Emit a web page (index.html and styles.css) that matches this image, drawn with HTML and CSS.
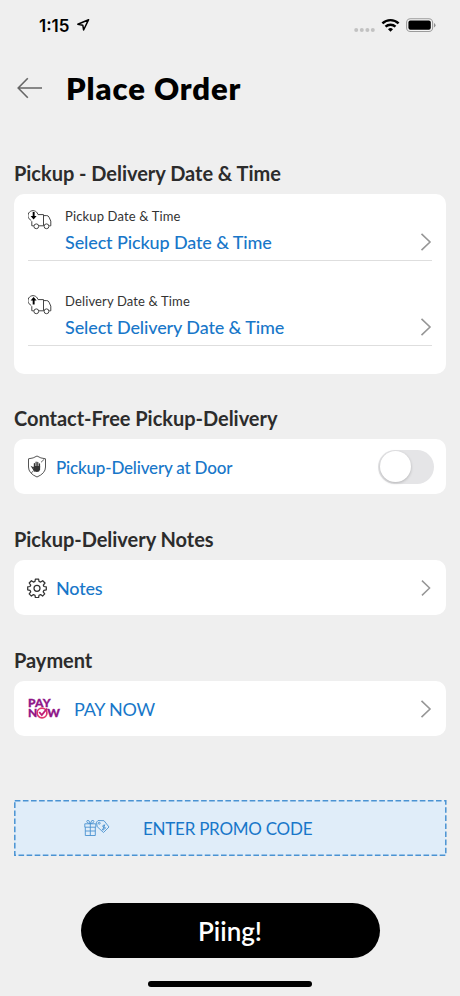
FILE: index.html
```html
<!DOCTYPE html>
<html lang="en">
<head>
<meta charset="utf-8">
<title>Place Order</title>
<link rel="stylesheet" href="styles.css">
</head>
<body>
<div class="status">
  <span class="clock">1:15</span>
  <svg class="loc" width="14" height="14" viewBox="0 0 14 14"><path d="M12.600 1.700 1.800 6.200 6.800 7.200 7.600 12Z" fill="none" stroke="#000" stroke-width="1.500" stroke-linejoin="round"/></svg>
  <svg class="indicators" width="84" height="18" viewBox="0 0 84 18">
    <g fill="#c2c2c2"><circle cx="4.2" cy="13" r="2"/><circle cx="9.8" cy="13" r="2"/><circle cx="15.4" cy="13" r="2"/><circle cx="20.8" cy="13" r="2"/></g>
    <g fill="none" stroke="#000" stroke-width="2.4"><path d="M30.4 6.4a11.6 11.6 0 0 1 16.2 0"/><path d="M33.5 9.7a7.2 7.2 0 0 1 10 0"/></g>
    <path d="M38.5 14.7 36 12.2a3.6 3.6 0 0 1 5 0Z"/>
    <rect x="54.6" y="1.7" width="26" height="12.8" rx="3.8" fill="#f4f4f4" stroke="#9b9b9b" stroke-width="1.1"/>
    <rect x="56.4" y="3.5" width="22.4" height="9.2" rx="2"/>
    <path d="M82 6v4.4q1.5-.8 1.5-2.2T82 6Z" fill="#8f8f8f"/>
  </svg>
</div>
<header class="header">
  <svg width="26" height="22" viewBox="0 0 26 22"><path d="M25 11H1.2M10.8 1.2 1.2 11l9.6 9.8" fill="none" stroke="#666" stroke-width="1.6"/></svg>
  <h1>Place Order</h1>
</header>

<section>
  <h2>Pickup - Delivery Date &amp; Time</h2>
  <div class="card schedule">
    <div class="slot">
      <svg class="truck" width="24" height="20" viewBox="0 0 24 20">
        <g fill="none" stroke="#444" stroke-width="1"><path d="M5.800 15.800H3.800V11.200M9.800 4.600h5.700v11.200h-4.600M15.500 5.600h3.300q1.500 0 2.200 1.500l1.800 4v4.700h-1.600"/><path d="M3.200 10.300A5 5 0 1 1 9.800 4.200"/><circle cx="8.300" cy="16.300" r="2.400"/><circle cx="18.500" cy="16.300" r="2.400"/></g>
        <path d="M4.700 2h1.900v4h2L5.600 9.500 2.600 6h2.100Z"/>
      </svg>
      <div class="text"><span class="label">Pickup Date &amp; Time</span><span class="link">Select Pickup Date &amp; Time</span></div>
      <svg class="chev" width="12" height="20" viewBox="0 0 12 20"><path d="m1.5 1.8 8.5 8.2-8.5 8.2" fill="none" stroke="#969696" stroke-width="1.6"/></svg>
    </div>
    <div class="slot">
      <svg class="truck" width="24" height="20" viewBox="0 0 24 20">
        <g fill="none" stroke="#444" stroke-width="1"><path d="M5.800 15.800H3.800V11.200M9.800 4.600h5.700v11.200h-4.600M15.500 5.600h3.300q1.500 0 2.200 1.500l1.800 4v4.700h-1.600"/><path d="M3.200 10.300A5 5 0 1 1 9.800 4.200"/><circle cx="8.300" cy="16.300" r="2.400"/><circle cx="18.500" cy="16.300" r="2.400"/></g>
        <path d="M4.700 9.500h1.900v-4h2L5.600 2 2.600 5.500h2.100Z"/>
      </svg>
      <div class="text"><span class="label">Delivery Date &amp; Time</span><span class="link">Select Delivery Date &amp; Time</span></div>
      <svg class="chev" width="12" height="20" viewBox="0 0 12 20"><path d="m1.5 1.8 8.5 8.2-8.5 8.2" fill="none" stroke="#969696" stroke-width="1.6"/></svg>
    </div>
  </div>
</section>

<section>
  <h2>Contact-Free Pickup-Delivery</h2>
  <div class="card row">
    <svg width="20" height="23" viewBox="0 0 19 23">
      <path d="M9.5 1Q13 3.4 18 3.8V12q0 6.4-8.5 10Q1 18.4 1 12V3.8Q6 3.4 9.500 1Z" fill="none" stroke="#555" stroke-width="1"/>
      <path d="M7 16 4.600 12.200l2.300 1V8.500M8.600 12V7M10.300 12V7.400M12 12.500V8.800" fill="none" stroke="#333" stroke-width="1.200" stroke-linecap="round"/>
      <path d="M6.300 11h6.300v3.500q-.5 2.500-3.200 2.500T6.300 14.500Z" fill="#333"/><path d="m13.500 7.300 3.300-3.100M3.800 18l2.500-2.600" stroke="#555" stroke-width=".9"/>
    </svg>
    <span class="link door">Pickup-Delivery at Door</span>
    <span class="switch"><span class="knob"></span></span>
  </div>
</section>

<section>
  <h2>Pickup-Delivery Notes</h2>
  <div class="card row">
    <svg width="20" height="20" viewBox="0 0 20 20" fill="none" stroke="#333" stroke-width="1.250" stroke-linejoin="round"><path d="M8.400 1h3.200l.4 2.400 1.700.7 2-1.400L18 5l-1.700 2.100.6 1.400 2.400.3v3l-2.400.5-.7 1.500 1.500 2.100-2.100 2.200-2-1.500-1.600.7-.4 2.300H8.400L8 17.300l-1.600-.7-2 1.500-2.200-2.200 1.500-2.100-.7-1.500-2.300-.5v-3l2.300-.3.700-1.400L2.200 5l2.200-2.300 2 1.400L8 3.400Z"/><circle cx="10" cy="10.300" r="3"/></svg>
    <span class="link notes">Notes</span>
    <svg class="chev" width="12" height="18" viewBox="0 0 12 20"><path d="m1.500 1.800 8.500 8.200-8.500 8.200" fill="none" stroke="#969696" stroke-width="1.600"/></svg>
  </div>
</section>

<section>
  <h2>Payment</h2>
  <div class="card row">
    <div class="paylogo">
      PAY<br>NOW
      <svg class="tick" width="13" height="13" viewBox="0 0 13 13"><circle cx="6" cy="7" r="4.900" fill="#fff" stroke="#e0386c" stroke-width="1.700"/><path d="m3.200 6 2.600 3.100 5.200-6.600" fill="none" stroke="#c02078" stroke-width="1.900"/></svg>
    </div>
    <span class="link paynow">PAY NOW</span>
    <svg class="chev" width="12" height="20" viewBox="0 0 12 20"><path d="m1.500 1.800 8.500 8.200-8.500 8.200" fill="none" stroke="#969696" stroke-width="1.600"/></svg>
  </div>
</section>

<div class="promo">
  <svg class="outline" width="433" height="57" viewBox="0 0 433 57"><rect x=".800" y=".800" width="431" height="54.500" fill="none" stroke="#4a93d3" stroke-width="1.500" stroke-dasharray="5.600 2.500"/></svg>
  <svg width="26" height="18" viewBox="0 0 26 18" fill="none" stroke="#4a92d0" stroke-width=".9">
    <path d="M.8 4.800h11V8.200H.8ZM1.300 8.200v8.300h10V8.200M6.300 4.800v11.700M1.300 12h10M6.300 4.600Q1.500 3.800 3.200 1.500 5 .2 6.300 4.600 7.600.2 9.400 1.500q1.700 2.300-3.100 3.100"/>
    <path d="m12.500 3.200 1.500-1.700 6 .2 5 6.300-5.500 5.500-6.300-5.800Z"/><circle cx="15.200" cy="4.200" r="1"/><path d="M21 6.500q-2-1-2.200.5t1.800 1.400-.2 1.800-2-.3M20.800 5.500l-2 5.300" stroke-width="1"/>
  </svg>
  <span>ENTER PROMO CODE</span>
</div>
<button class="submit">Piing!</button>
<div class="home"></div>
</body>
</html>
```

FILE: styles.css
```css
* { box-sizing: border-box; }
body {
  margin: 0;
  width: 460px;
  height: 996px;
  padding: 0 14px;
  overflow: hidden;
  background: #efefef;
  font-family: Lato, sans-serif;
  display: flex;
  flex-direction: column;
}
svg { display: block; flex: none; }
.status { display: flex; align-items: center; height: 50px; padding-left: 25px; flex: none; }
.clock { font: 600 17px/20px Inter, sans-serif; width: 33px; padding-top: 1px; white-space: nowrap; }
.loc { margin-left: 4px; }
.indicators { margin-left: auto; margin-right: 10px; position: relative; top: 1px; }
.header { display: flex; align-items: center; height: 76px; padding-left: 3px; flex: none; }
h1 { margin: 0 0 0 23px; font-size: 31px; line-height: 38px; font-weight: 800; letter-spacing: 0.9px; }
section { height: 121px; padding-top: 35px; flex: none; }
section:first-of-type { height: 245px; }
h2 { margin: 0 0 9px; font-size: 20px; line-height: 24px; font-weight: 700; letter-spacing: -0.03px; color: #2c2c2c; white-space: nowrap; }
.card { background: #fff; border-radius: 10px; }
.schedule { height: 180px; padding: 0 14px; }
.slot { height: 67px; border-bottom: 1px solid #dedede; display: flex; padding-top: 14px; }
.slot + .slot { margin-top: 18px; }
.truck { margin-top: 2px; }
.text { margin-left: 13px; flex: 1; display: flex; flex-direction: column; }
.label { font-size: 13px; line-height: 16px; letter-spacing: 0.14px; color: #333; }
.link { font-size: 18px; line-height: 22px; font-weight: 500; letter-spacing: -0.12px; color: #1877c9; white-space: nowrap; }
.text .link { margin-top: 7px; }
.slot .chev { margin-top: 24px; }
.row { height: 55px; display: flex; align-items: center; padding: 0 14px 0 13px; }
.row .chev { margin-left: auto; }
.door, .notes { margin-left: 9px; }
.door { font-size: 17px; letter-spacing: -0.18px; padding-top: 2px; }
.notes { letter-spacing: -0.2px; }
.paylogo { position: relative; width: 34px; height: 22px; color: #8f1688; font-size: 12px; line-height: 10px; font-weight: 900; letter-spacing: 0.2px; -webkit-text-stroke: 0.3px #8f1688; padding-left: 1px; white-space: nowrap; }
.tick { position: absolute; left: 9px; top: 8px; }
.paynow { margin-left: 13px; font-weight: 400; letter-spacing: -0.25px; }
.switch { margin-left: auto; margin-right: -2px; width: 56px; height: 34px; border-radius: 17px; background: #e5e5e7; padding: 1.5px; }
.knob { display: block; width: 31px; height: 31px; border-radius: 50%; background: #fff; box-shadow: 0 1px 3px rgba(0,0,0,.22); }
.promo { position: relative; flex: none; margin-top: 66px; height: 56px; display: flex; align-items: center; padding-left: 70px; background: #e0edf9; color: #1877c9; }
.outline { position: absolute; left: 0; top: 0; }
.promo span { margin-left: 33px; padding-top: 1px; font-size: 17px; line-height: 22px; letter-spacing: -0.25px; }
.submit { flex: none; align-self: center; margin: 47px 0 0; width: 299px; height: 55px; border: 0; border-radius: 28px; background: #000; color: #fff; font: 600 26px/32px Lato, sans-serif; }
.home { flex: none; align-self: center; margin-top: 23px; width: 164px; height: 6px; border-radius: 3px; background: #000; }
```
